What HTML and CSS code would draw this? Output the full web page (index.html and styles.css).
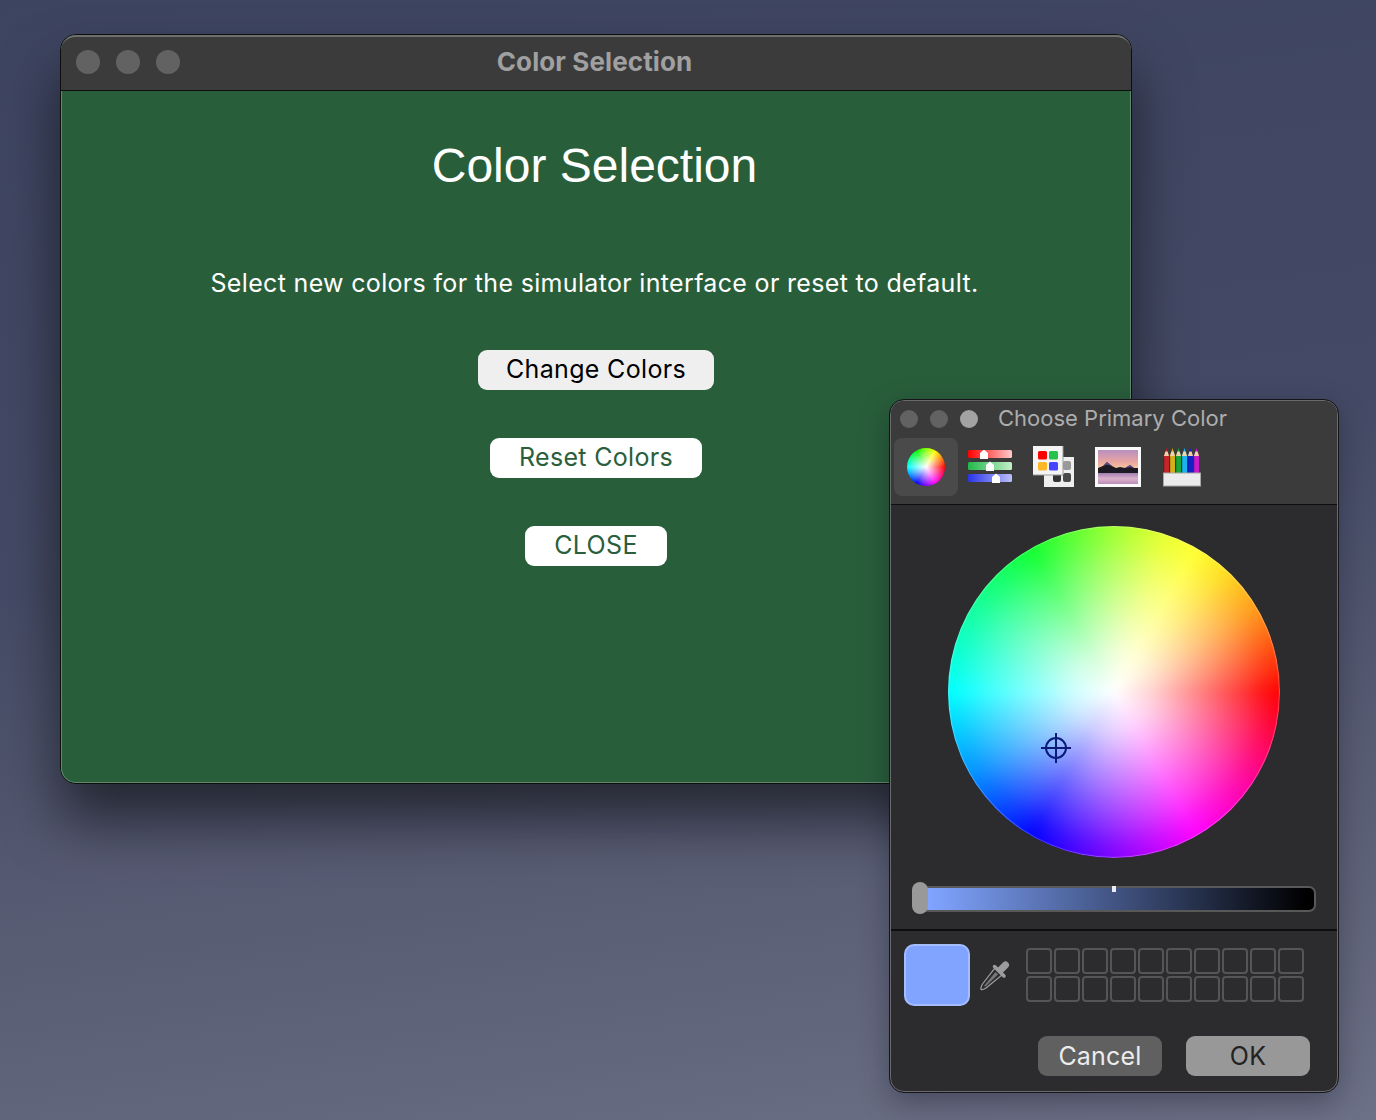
FILE: index.html
```html
<!DOCTYPE html>
<html>
<head>
    <meta charset="utf-8">
    <title>Color Selection</title>
    <link rel="stylesheet" href="styles.css">
</head>
<body>
    <div class="window main-window">
        <div class="titlebar">
            <div class="dots">
                <span class="dot"></span>
                <span class="dot"></span>
                <span class="dot"></span>
            </div>
            <div class="window-title">Color Selection</div>
        </div>
        <div class="content">
            <h1>Color Selection</h1>
            <p class="intro">Select new colors for the simulator interface or reset to default.</p>
            <div class="buttons">
                <button class="btn btn-active">Change Colors</button>
                <button class="btn">Reset Colors</button>
                <button class="btn">CLOSE</button>
            </div>
        </div>
    </div>

    <div class="window picker">
        <div class="picker-head">
            <div class="picker-titlebar">
                <span class="mini-dot"></span>
                <span class="mini-dot"></span>
                <span class="mini-dot mini-dot-on"></span>
                <span class="picker-title">Choose Primary Color</span>
            </div>
            <div class="tools">
                <div class="tool tool-selected"><div class="tool-wheel"></div></div>
                <div class="tool">
                    <svg width="44" height="34" viewBox="0 0 44 34">
                        <defs>
                            <linearGradient id="gr"><stop offset="0" stop-color="#f00"/><stop offset="1" stop-color="#fcc"/></linearGradient>
                            <linearGradient id="gg"><stop offset="0" stop-color="#22b84a"/><stop offset="1" stop-color="#c4efc8"/></linearGradient>
                            <linearGradient id="gb"><stop offset="0" stop-color="#2a34e8"/><stop offset="1" stop-color="#bcc0fa"/></linearGradient>
                        </defs>
                        <rect x="0" y="0" width="44" height="8" rx="1.5" fill="url(#gr)"/>
                        <rect x="0" y="12" width="44" height="8" rx="1.5" fill="url(#gg)"/>
                        <rect x="0" y="24" width="44" height="8" rx="1.5" fill="url(#gb)"/>
                        <path d="M16 -0.5 L20 3 V9 H12 V3 Z" fill="#fff"/>
                        <path d="M22 11.5 L26 15 V21 H18 V15 Z" fill="#fff"/>
                        <path d="M28 23.5 L32 27 V33 H24 V27 Z" fill="#fff"/>
                    </svg>
                </div>
                <div class="tool">
                    <svg width="42" height="42" viewBox="0 0 42 42">
                        <rect x="11" y="11" width="30" height="30" fill="#eee"/>
                        <rect x="30" y="15" width="8" height="9" rx="2" fill="#999"/>
                        <rect x="20" y="27" width="8" height="9" rx="2" fill="#333"/>
                        <rect x="30" y="27" width="8" height="9" rx="2" fill="#4a4a4a"/>
                        <rect x="0" y="0" width="30" height="29" fill="#f4f4f4"/>
                        <path d="M0 29 H30 V0" fill="none" stroke="#9a9a9a" stroke-width="1"/>
                        <rect x="5" y="5" width="9" height="8.5" rx="1.5" fill="#f00"/>
                        <rect x="16" y="5" width="9" height="8.5" rx="1.5" fill="#27c24c"/>
                        <rect x="5" y="16" width="9" height="8.5" rx="1.5" fill="#fdb827"/>
                        <rect x="16" y="16" width="9" height="8.5" rx="1.5" fill="#4444ff"/>
                    </svg>
                </div>
                <div class="tool">
                    <svg width="46" height="40" viewBox="0 0 46 40">
                        <defs>
                            <linearGradient id="sky" x1="0" y1="0" x2="0" y2="1"><stop offset="0" stop-color="#b98fc0"/><stop offset=".55" stop-color="#eaa6a0"/><stop offset="1" stop-color="#fdd89a"/></linearGradient>
                            <linearGradient id="water" x1="0" y1="0" x2="0" y2="1"><stop offset="0" stop-color="#a07fae"/><stop offset=".5" stop-color="#dcb0cc"/><stop offset="1" stop-color="#b98fb8"/></linearGradient>
                        </defs>
                        <rect width="46" height="40" fill="#fafafa"/>
                        <rect x="3" y="3" width="40" height="22" fill="url(#sky)"/>
                        <rect x="3" y="26" width="40" height="11" fill="url(#water)"/>
                        <path d="M3 21 L8 19 L12 15 L17 19 L21 21 L25 20 L30 21 L35 18 L39 21 L43 21 V26 H3 Z" fill="#1d1a24"/>
                        <path d="M8 19 L12 15 L17 19 L12 17.5 Z M30 21 L35 18 L39 21 L35 20 Z" fill="#5f5290"/>
                    </svg>
                </div>
                <div class="tool">
                    <svg width="38" height="39" viewBox="0 0 38 39">
                        <path d="M1 8 L3.5 0 L6 8 V25 H1 Z" fill="#c8252b"/>
                        <path d="M7 8 L9.5 0 L12 8 V25 H7 Z" fill="#d4b018"/>
                        <path d="M13 8 L15.500 0 L18 8 V25 H13 Z" fill="#17a838"/>
                        <path d="M19 8 L21.500 0 L24 8 V25 H19 Z" fill="#19b4f0"/>
                        <path d="M25 8 L27.500 0 L30 8 V25 H25 Z" fill="#1420c8"/>
                        <path d="M31 8 L33.500 0 L36 8 V25 H31 Z" fill="#c81cc8"/>
                        <path d="M1 8 L2.400 3.500 H4.600 L6 8 Z M7 8 L8.400 3.500 H10.600 L12 8 Z M13 8 L14.400 3.500 H16.600 L18 8 Z M19 8 L20.400 3.500 H22.600 L24 8 Z M25 8 L26.400 3.500 H28.600 L30 8 Z M31 8 L32.400 3.500 H34.600 L36 8 Z" fill="#f0d4a8"/>
                        <path d="M1 9 V25 M7 9 V25 M13 9 V25 M19 9 V25 M25 9 V25 M31 9 V25" stroke="#000" stroke-opacity=".25" stroke-width="1"/>
                        <rect x=".5" y="25" width="37" height="13" fill="#ececec" stroke="#a8a8a8" stroke-width="1"/>
                    </svg>
                </div>
            </div>
        </div>

        <div class="wheel-area">
            <div class="wheel">
                <svg class="crosshair" width="32" height="32" viewBox="0 0 32 32">
                    <circle cx="16" cy="16" r="10" fill="none" stroke="#0c1a78" stroke-width="2"/>
                    <path d="M16 1 V31 M1 16 H31" stroke="#0c1a78" stroke-width="2"/>
                </svg>
            </div>
            <div class="slider">
                <div class="slider-track"></div>
                <span class="slider-tick"></span>
                <span class="slider-knob"></span>
            </div>
        </div>

        <div class="picker-bottom">
            <div class="well-row">
                <div class="swatch"></div>
                <svg class="dropper" width="32" height="32" viewBox="0 0 32 32">
                    <path d="M15 8 L22 15 L6 28 Q3 30 1 29.5 Q.5 27 2.500 24 Z" fill="#2c2c2e" stroke="#a0a0a0" stroke-width="1.200"/>
                    <path d="M4 26 L15.500 12 L18 14.500 L5.500 26.500 Z" fill="#77777a"/>
                    <path d="M25.500 5 L20.500 10" stroke="#9c9c9c" stroke-width="7" stroke-linecap="round"/>
                    <path d="M14.500 6.500 L24 16" stroke="#9c9c9c" stroke-width="3.500" stroke-linecap="round"/>
                </svg>
                <div class="wells">
                    <span class="well"></span><span class="well"></span><span class="well"></span><span class="well"></span><span class="well"></span>
                    <span class="well"></span><span class="well"></span><span class="well"></span><span class="well"></span><span class="well"></span>
                    <span class="well"></span><span class="well"></span><span class="well"></span><span class="well"></span><span class="well"></span>
                    <span class="well"></span><span class="well"></span><span class="well"></span><span class="well"></span><span class="well"></span>
                </div>
            </div>
            <div class="picker-actions">
                <button class="action">Cancel</button>
                <button class="action action-ok">OK</button>
            </div>
        </div>
    </div>
</body>
</html>
```

FILE: styles.css
```css
* {
    box-sizing: border-box;
}
html, body {
    margin: 0;
    height: 100%;
}
body {
    position: relative;
    width: 1376px;
    height: 1120px;
    overflow: hidden;
    background: linear-gradient(172deg, #3d4460 0%, #444a65 45%, #5a5e75 75%, #63677d 88%, #6d7188 100%);
    font-family: Inter, "Liberation Sans", sans-serif;
}

.window {
    position: absolute;
}

/* main window */
.main-window {
    left: 60px;
    top: 34px;
    width: 1072px;
    height: 750px;
    display: flex;
    flex-direction: column;
    border-radius: 16px;
    border: 1px solid #0e0e0e;
    background: #295e3b;
    box-shadow: 0 36px 56px rgba(0, 0, 0, 0.55);
}
.titlebar {
    position: relative;
    flex: none;
    height: 56px;
    display: flex;
    align-items: center;
    justify-content: center;
    background: #3b3b3c;
    border-top: 2px solid #6f6f6f;
    border-bottom: 1px solid #0e0e0e;
    border-radius: 15px 15px 0 0;
}
.dots {
    position: absolute;
    left: 15px;
    top: 13px;
    display: flex;
    gap: 16px;
}
.dot {
    width: 24px;
    height: 24px;
    border-radius: 50%;
    background: #626262;
}
.window-title {
    margin: 0 3px 5px 0;
    font-size: 26px;
    font-weight: 700;
    letter-spacing: 0.1px;
    color: #a0a0a0;
}
.content {
    flex: 1;
    display: flex;
    flex-direction: column;
    align-items: center;
    padding-right: 3px;
    color: #fff;
    border: 1px solid #5f8a6f;
    border-top: 0;
    border-radius: 0 0 15px 15px;
}
h1 {
    margin: 45px 0 0;
    font-family: "Liberation Sans", sans-serif;
    font-size: 48px;
    font-weight: 400;
    line-height: 60px;
}
.intro {
    margin: 72px 0 0;
    font-size: 25px;
    line-height: 30px;
    letter-spacing: 0.33px;
}
.buttons {
    margin-top: 52px;
    margin-left: 3px;
    display: flex;
    flex-direction: column;
    align-items: center;
    gap: 48px;
}
.btn {
    height: 40px;
    padding: 0 29px 2px;
    border: 0;
    border-radius: 9px;
    background: #fff;
    color: #2a5e3c;
    font-family: inherit;
    font-size: 25px;
    letter-spacing: 0.33px;
}
.btn-active {
    padding: 0 28px 2px;
    background: #efefef;
    color: #000;
}

/* color picker */
.picker {
    left: 890px;
    top: 400px;
    width: 448px;
    height: 692px;
    display: flex;
    flex-direction: column;
    overflow: hidden;
    border-radius: 14px;
    background: #2c2c2e;
    border: 1px solid #6a6a6a;
    outline: 1px solid #15151a;
    box-shadow: 0 10px 30px rgba(10, 12, 30, 0.35);
}
.picker-head {
    flex: none;
    height: 104px;
    background: #3b3b3c;
    border-bottom: 1px solid #0e0e0e;
}
.picker-titlebar {
    display: flex;
    align-items: center;
    height: 36px;
    padding-left: 9px;
    gap: 12px;
}
.mini-dot {
    width: 18px;
    height: 18px;
    border-radius: 50%;
    background: #626262;
}
.mini-dot-on {
    background: #a3a3a3;
}
.picker-title {
    margin: 0 0 2px 8px;
    font-size: 22px;
    color: #adadad;
}
.tools {
    display: flex;
    margin-top: 1px;
    padding-left: 3px;
}
.tool {
    width: 64px;
    height: 58px;
    display: flex;
    align-items: center;
    justify-content: center;
    border-radius: 8px;
}
.tool-selected {
    background: #4a4a4b;
}
.tool-wheel {
    width: 38px;
    height: 38px;
    border-radius: 50%;
    background:
        radial-gradient(circle closest-side, #fff 0%, rgba(255, 255, 255, 0) 100%),
        conic-gradient(#80ff00, #ffff00 30deg, #ff0000 90deg, #ff00ff 150deg, #0000ff 210deg, #00ffff 270deg, #00ff00 330deg, #80ff00);
}
.wheel-area {
    flex: none;
    height: 426px;
    padding: 21px 0 0 21px;
    border-bottom: 2px solid #0e0e0e;
}
.wheel {
    position: relative;
    overflow: hidden;
    margin-left: 36px;
    width: 332px;
    height: 332px;
    border-radius: 50%;
}
.wheel::before {
    content: "";
    position: absolute;
    inset: -14px;
    filter: blur(4px);
    background:
        radial-gradient(circle 168px at center, #fff 0%, rgba(255, 255, 255, 0.8) 25%, rgba(255, 255, 255, 0.52) 50%, rgba(255, 255, 255, 0.22) 77%, rgba(255, 255, 255, 0.07) 90%, rgba(255, 255, 255, 0) 100%),
        conic-gradient(#a0ff30, #e8ff30 18deg, #ffff30 30deg, #ffe020 42deg, #ff9818 60deg, #ff0000 90deg, #ff00a0 125deg, #ff00ff 150deg, #8000ff 180deg, #0000ff 210deg, #0090ff 240deg, #00ffff 270deg, #10ffa0 300deg, #10ff30 330deg, #a0ff30);
}
.wheel::after {
    content: "";
    position: absolute;
    inset: 0;
    border-radius: 50%;
    box-shadow: inset 0 0 1px 1px rgba(255, 255, 255, 0.3);
}
.crosshair {
    position: absolute;
    z-index: 1;
    left: 92px;
    top: 206px;
}
.slider {
    position: relative;
    margin-top: 24px;
    width: 404px;
    height: 32px;
}
.slider-track {
    position: absolute;
    left: 0;
    right: 0;
    top: 4px;
    height: 26px;
    border: 2px solid #585858;
    border-radius: 7px;
    background: linear-gradient(to right, #80a4ff 0, #80a4ff 16px, #000 98%);
}
.slider-tick {
    position: absolute;
    left: 200px;
    top: 4px;
    width: 4px;
    height: 6px;
    background: #e8ecf6;
}
.slider-knob {
    position: absolute;
    left: 0;
    top: 0;
    width: 16px;
    height: 32px;
    border-radius: 8px;
    background: #999;
}
.picker-bottom {
    flex: 1;
    padding: 13px 0 0 13px;
}
.well-row {
    display: flex;
    align-items: flex-start;
}
.swatch {
    width: 66px;
    height: 62px;
    border-radius: 10px;
    background: #80a4ff;
    border: 2px solid #a3bdff;
}
.dropper {
    margin: 16px 0 0 10px;
}
.wells {
    margin: 4px 0 0 14px;
    display: grid;
    grid-template-columns: repeat(10, 26px);
    gap: 2px;
}
.well {
    height: 26px;
    border: 2px solid #555;
    border-radius: 4px;
}
.picker-actions {
    display: flex;
    justify-content: flex-end;
    gap: 24px;
    margin-top: 30px;
    padding-right: 27px;
}
.action {
    width: 124px;
    height: 40px;
    padding-bottom: 2px;
    border: 0;
    border-radius: 9px;
    background: #606060;
    color: #ececec;
    font-family: inherit;
    font-size: 25px;
    letter-spacing: 0.2px;
}
.action-ok {
    background: #989898;
    color: #222;
}
```
